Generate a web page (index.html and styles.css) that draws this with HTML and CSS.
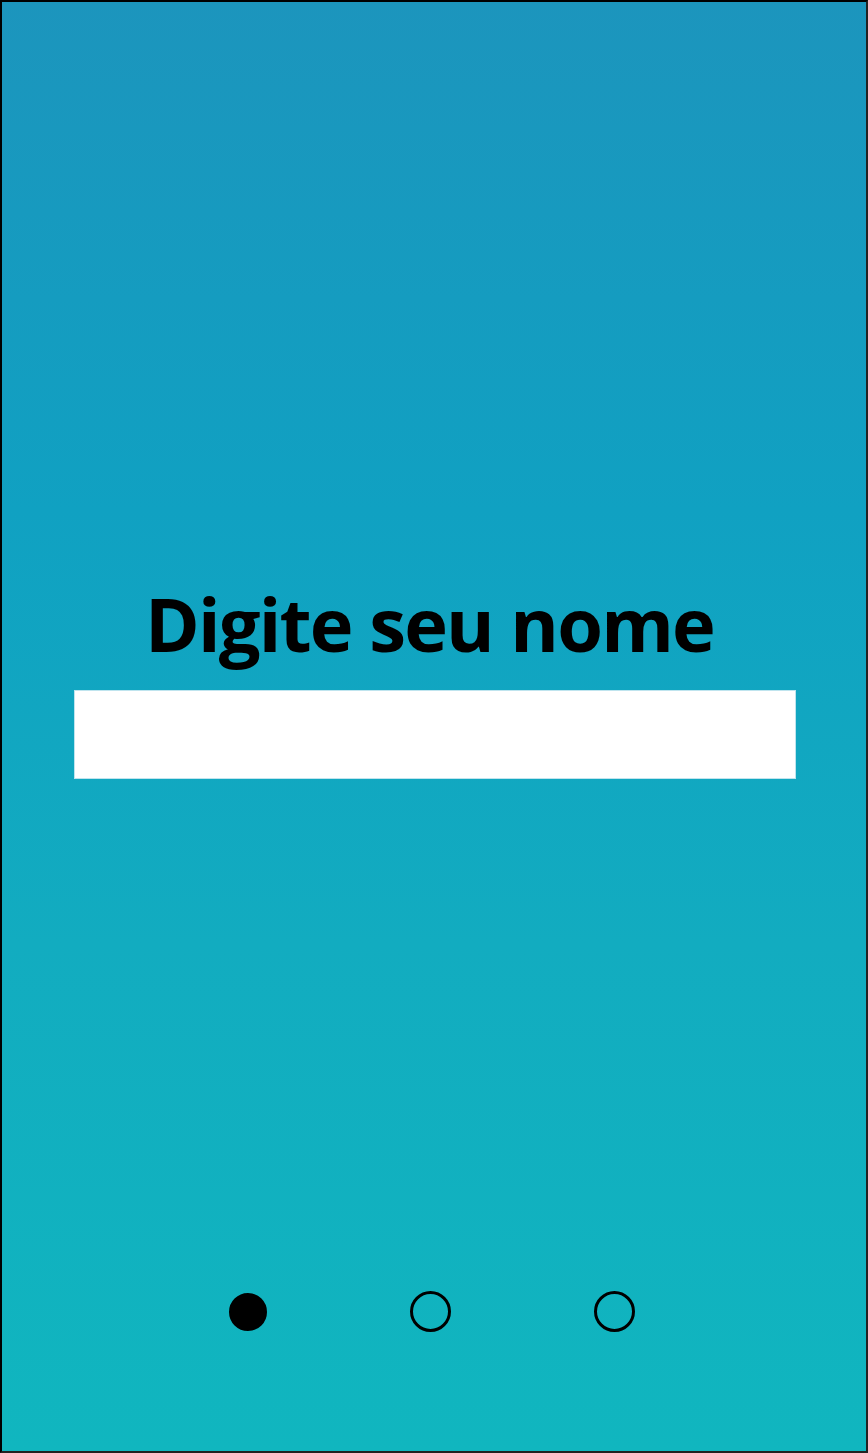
FILE: index.html
```html
<!DOCTYPE html>
<html lang="pt">
<head>
<meta charset="utf-8">
<link rel="stylesheet" href="styles.css">
</head>
<body>
<main class="screen">
  <section class="form">
    <h1 class="title">Digite seu nome</h1>
    <input class="name-input" type="text" aria-label="Nome">
  </section>
  <nav class="pager">
    <span class="dot dot-active"></span>
    <span class="dot"></span>
    <span class="dot"></span>
  </nav>
</main>
</body>
</html>
```

FILE: styles.css
```css
* { box-sizing: border-box; }
html, body { margin: 0; padding: 0; }
body { width: 868px; height: 1453px; }
.screen {
  width: 868px;
  height: 1453px;
  border-top: 2px solid #000;
  border-left: 2px solid #000;
  border-right: 2px solid #222;
  border-bottom: 2px solid #222;
  background: linear-gradient(180deg, #1c95bd 0%, #10a1c2 35%, #12acc0 65%, #10b6bf 100%);
  display: flex;
  flex-direction: column;
  align-items: center;
}
.form {
  width: 100%;
  display: flex;
  flex-direction: column;
  align-items: center;
  padding-top: 572px;
}
.title {
  margin: 0;
  font-family: "Open Sans", "Liberation Sans", sans-serif;
  font-weight: 700;
  font-size: 74px;
  line-height: 100px;
  letter-spacing: -1.8px;
  color: #000;
  margin-left: -9px;
}
.name-input {
  margin-top: 16px;
  width: 722px;
  height: 89px;
  border: 1px solid #bfe4ee;
  background: #fff;
  margin-left: 2px;
  outline: none;
}
.pager {
  margin-top: auto;
  margin-bottom: 119px;
  display: flex;
  align-items: center;
  gap: 143px;
  margin-left: -4px;
}
.dot {
  width: 41px;
  height: 41px;
  border-radius: 50%;
  border: 3.3px solid #000;
}
.dot-active {
  width: 38px;
  height: 38px;
  background: #000;
}
```
